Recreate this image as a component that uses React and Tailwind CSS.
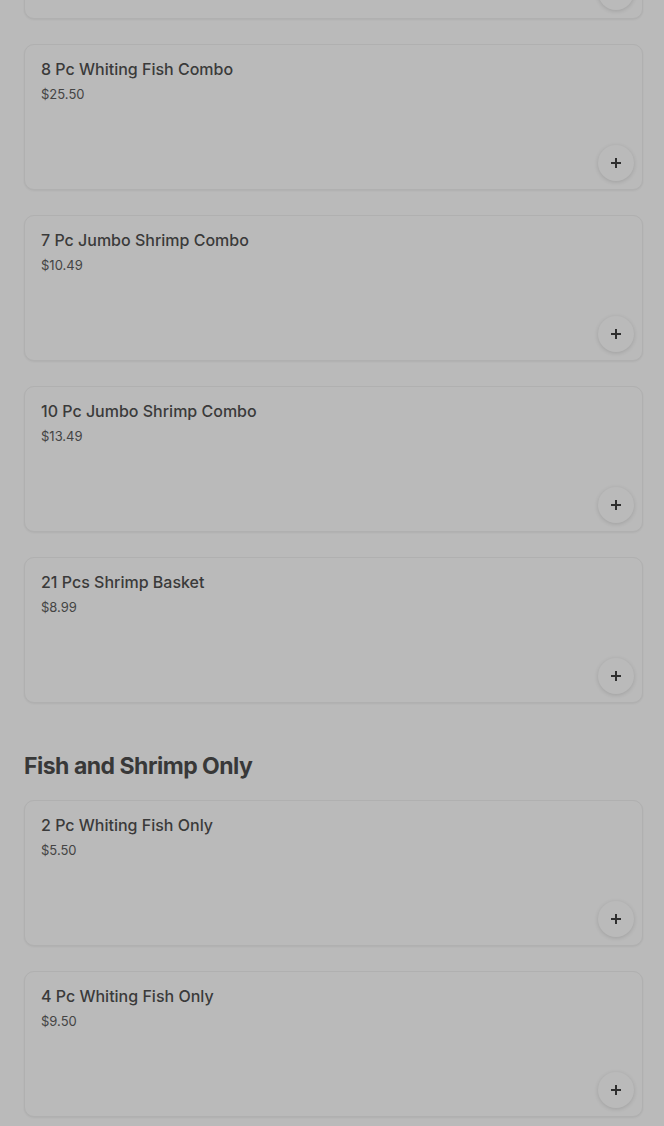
import React from "react";

const Plus = () => (
  <svg width="12" height="12" viewBox="0 0 12 12" fill="none">
    <path d="M6 1v10M1 6h10" stroke="#2f2f2f" strokeWidth="2" strokeLinecap="butt" />
  </svg>
);

function Card({ title, price, className = "" }) {
  return (
    <div className={"h-[146px] rounded-[10px] border border-[#b0b0b0] bg-[#bababa] shadow-[0_1px_2px_rgba(0,0,0,0.06)] flex flex-col justify-between pl-4 pr-2 pt-[13px] pb-2 " + className}>
      <div>
        {title ? (
          <>
            <div className="text-[16px] leading-[22px] font-medium text-[#3a3a3a]">{title}</div>
            <div className="mt-[5px] text-[13px] leading-[18px] text-[#444444]">{price}</div>
          </>
        ) : null}
      </div>
      <div className="flex justify-end">
        <div className="w-9 h-9 rounded-full bg-[#bababa] shadow-[0_1px_4px_rgba(0,0,0,0.14)] flex items-center justify-center">
          <Plus />
        </div>
      </div>
    </div>
  );
}

export default function App() {
  const combos = [
    ["8 Pc Whiting Fish Combo", "$25.50"],
    ["7 Pc Jumbo Shrimp Combo", "$10.49"],
    ["10 Pc Jumbo Shrimp Combo", "$13.49"],
    ["21 Pcs Shrimp Basket", "$8.99"],
  ];
  const only = [
    ["2 Pc Whiting Fish Only", "$5.50"],
    ["4 Pc Whiting Fish Only", "$9.50"],
  ];
  return (
    <div className="w-[664px] h-[1126px] overflow-hidden bg-[#bababa]" style={{ fontFamily: "Inter, 'Noto Sans', sans-serif" }}>
      <div className="pl-6 pr-[21px] flex flex-col">
        <div className="flex flex-col gap-[25px] mt-[-127px]">
          <Card title="" price="" />
          {combos.map(([t, p]) => (
            <Card key={t} title={t} price={p} />
          ))}
        </div>
        <h2 className="mt-[49px] mb-[20px] text-[23px] leading-[28px] font-bold tracking-[-0.5px] text-[#383838]">
          Fish and Shrimp Only
        </h2>
        <div className="flex flex-col gap-[25px]">
          {only.map(([t, p]) => (
            <Card key={t} title={t} price={p} />
          ))}
        </div>
      </div>
    </div>
  );
}
